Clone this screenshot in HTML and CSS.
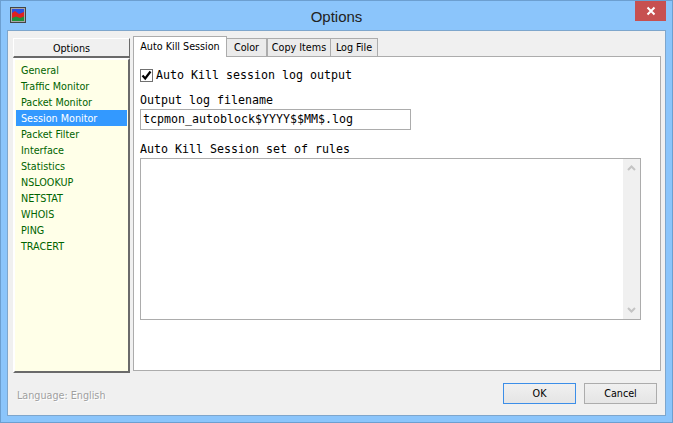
FILE: index.html
```html
<!DOCTYPE html>
<html lang="en">
<head>
<meta charset="utf-8">
<title>Options</title>
<link rel="stylesheet" href="styles.css">
</head>
<body>
<div class="window">
  <header class="titlebar">
    <svg class="appicon" width="16" height="16" viewBox="0 0 16 16">
      <rect x="0.5" y="0.5" width="15" height="15" fill="#a8a8a8" stroke="#444"/>
      <rect x="2" y="2" width="12" height="12" fill="#2a50e0"/>
      <path d="M2 6 L5 4 L9 7 L14 5 V11 H2 Z" fill="#e02020"/>
      <path d="M2 11 L6 9.5 L10 11 L14 9.5 V14 H2 Z" fill="#20903a"/>
    </svg>
    <div class="title">Options</div>
    <div class="close">
      <svg width="10" height="10" viewBox="0 0 10 10"><path d="M1.5 1.5 L8.5 8.5 M8.5 1.5 L1.5 8.5" stroke="#fff" stroke-width="2" fill="none"/></svg>
    </div>
  </header>
  <main class="client">
    <div class="top">
      <aside class="side">
        <div class="side-head">Options</div>
        <ul class="list">
          <li>General</li>
          <li>Traffic Monitor</li>
          <li>Packet Monitor</li>
          <li class="sel">Session Monitor</li>
          <li>Packet Filter</li>
          <li>Interface</li>
          <li>Statistics</li>
          <li>NSLOOKUP</li>
          <li>NETSTAT</li>
          <li>WHOIS</li>
          <li>PING</li>
          <li>TRACERT</li>
        </ul>
      </aside>
      <section class="tabs">
        <nav class="tabbar">
          <div class="tab active">Auto Kill Session</div>
          <div class="tab t-color">Color</div>
          <div class="tab t-copy">Copy Items</div>
          <div class="tab t-log">Log File</div>
        </nav>
        <div class="panel">
          <div class="check">
            <span class="box"><svg width="11" height="11" viewBox="0 0 11 11"><path d="M1.5 5.5 L4.2 8.5 L9.5 1.5" stroke="#000" stroke-width="2.2" fill="none"/></svg></span>
            <span class="mono">Auto Kill session log output</span>
          </div>
          <div class="mono lab1">Output log filename</div>
          <div class="input mono">tcpmon_autoblock$YYYY$$MM$.log</div>
          <div class="mono lab2">Auto Kill Session set of rules</div>
          <div class="memo">
            <div class="sb">
              <svg width="9" height="6" viewBox="0 0 9 6"><path d="M1 5 L4.5 1.5 L8 5" stroke="#c4c4c4" stroke-width="2" fill="none"/></svg>
              <svg width="9" height="6" viewBox="0 0 9 6"><path d="M1 1 L4.5 4.5 L8 1" stroke="#c4c4c4" stroke-width="2" fill="none"/></svg>
            </div>
          </div>
        </div>
      </section>
    </div>
    <footer class="bottom">
      <div class="lang">Language: English</div>
      <div class="btns">
        <div class="btn def">OK</div>
        <div class="btn">Cancel</div>
      </div>
    </footer>
  </main>
</div>
</body>
</html>
```
FILE: styles.css
```css
* { box-sizing: border-box; }
html, body { margin: 0; padding: 0; }
body { width: 673px; height: 423px; overflow: hidden; font-family: "DejaVu Sans Condensed", "DejaVu Sans", sans-serif; font-size: 10.7px; color: #000; }
.window { width: 673px; height: 423px; background: #8bc5fb; border: 1px solid #6c9fd0; display: flex; flex-direction: column; padding: 0 6px 6px 6px; }
.titlebar { height: 29px; display: flex; align-items: flex-start; position: relative; flex: none; }
.appicon { margin: 6px 0 0 3px; }
.title { position: absolute; left: 0; right: 0; top: 7px; text-align: center; font-family: "Liberation Sans", sans-serif; font-size: 15px; line-height: 17px; color: #222; }
.close { position: absolute; right: 0; top: 0; width: 31px; height: 20px; background: #c75050; display: flex; align-items: center; justify-content: center; }
.client { flex: 1; background: #f0f0f0; border: 1px solid #7ea6cc; padding: 5px 4px 0 5px; display: flex; flex-direction: column; }
.top { display: flex; gap: 3px; height: 337px; flex: none; }
.side { width: 117px; flex: none; display: flex; flex-direction: column; margin-top: 2px; }
.side-head { height: 20px; background: #f0f0f0; border: 1px solid #fff; border-right-color: #6a6a6a; border-bottom: 2px solid #6a6a6a; text-align: center; line-height: 19px; flex: none; }
.list { list-style: none; margin: 0; padding: 2px 1px 0 1px; flex: 1; background: #ffffe8; border: 2px solid #fff; border-right-color: #6a6a6a; border-bottom-color: #6a6a6a; }
.list li { height: 16px; line-height: 17px; padding-left: 5px; color: #006400; }
.list li.sel { background: #3399ff; color: #fff; }
.tabs { flex: 1; display: flex; flex-direction: column; }
.tabbar { display: flex; height: 21px; flex: none; align-items: flex-end; position: relative; z-index: 1; margin-bottom: -1px; }
.tab { height: 19px; border: 1px solid #acacac; border-left-width: 0; background: #ebebeb; line-height: 17px; text-align: center; }
.tab.active { height: 21px; background: #fff; border-bottom: 0; border-left-width: 1px; width: 94px; line-height: 19px; }
.t-color { width: 40px; }
.t-copy { width: 64px; border-left-width: 1px; }
.t-log { width: 47px; }
.panel { flex: 1; background: #fff; border: 1px solid #acacac; padding: 0 0 0 6px; margin-bottom: 2px; display: flex; flex-direction: column; }
.mono { font-family: "DejaVu Sans Mono", monospace; font-size: 11.63px; line-height: 14px; color: #000; white-space: pre; }
.check { display: flex; align-items: center; gap: 3px; margin-top: 11px; height: 14px; }
.box { width: 13px; height: 13px; border: 1px solid #707070; background: #fff; display: flex; align-items: center; justify-content: center; }
.lab1 { margin-top: 11px; }
.input { width: 271px; height: 21px; border: 1px solid #acacac; margin-top: 2px; padding-left: 2px; line-height: 18px; }
.lab2 { margin-top: 12px; }
.memo { width: 501px; height: 162px; border: 1px solid #acacac; margin-top: 2px; background: #fff; display: flex; justify-content: flex-end; }
.sb { width: 17px; height: 100%; background: #f0f0f0; display: flex; flex-direction: column; justify-content: space-between; align-items: center; padding: 6px 0; }
.bottom { flex: 1; display: flex; justify-content: space-between; align-items: flex-start; }
.lang { color: #a0a0a0; text-shadow: 1px 1px 0 #fff; margin: 16px 0 0 4px; line-height: 14px; }
.btns { display: flex; gap: 8px; margin: 10px 4px 0 0; }
.btn { width: 73px; height: 21px; border: 1px solid #acacac; background: linear-gradient(#f0f0f0, #e5e5e5); text-align: center; line-height: 19px; }
.btn.def { border-color: #3c8ee8; }
```
